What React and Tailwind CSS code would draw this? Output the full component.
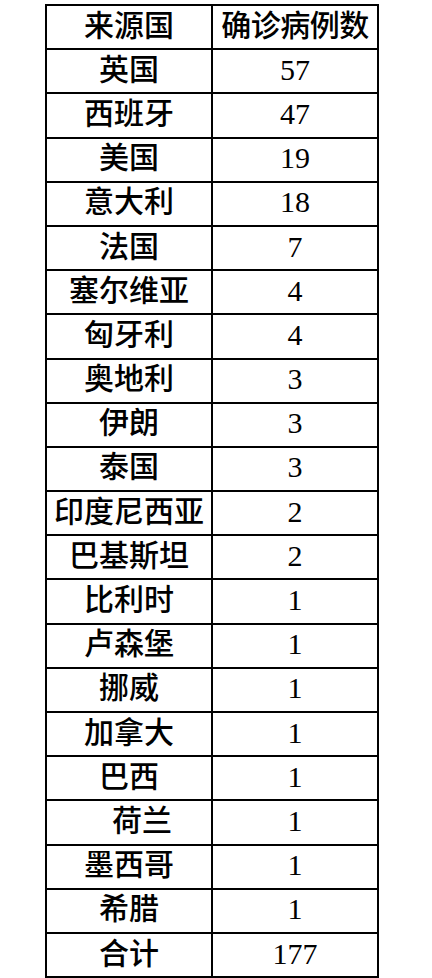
import React from "react";

const rows = [
    ["英国", "57"],
    ["西班牙", "47"],
    ["美国", "19"],
    ["意大利", "18"],
    ["法国", "7"],
    ["塞尔维亚", "4"],
    ["匈牙利", "4"],
    ["奥地利", "3"],
    ["伊朗", "3"],
    ["泰国", "3"],
    ["印度尼西亚", "2"],
    ["巴基斯坦", "2"],
    ["比利时", "1"],
    ["卢森堡", "1"],
    ["挪威", "1"],
    ["加拿大", "1"],
    ["巴西", "1"],
    ["荷兰", "1"],
    ["墨西哥", "1"],
    ["希腊", "1"],
];

const font = { fontFamily: '"Liberation Serif", "Noto Sans CJK SC", serif' };

const App = () => {
    return (
        <div className="w-[432px] h-[978px] overflow-hidden bg-white text-black font-medium" style={font}>
            <table className="ml-[45px] mt-[4px] border-collapse table-fixed w-[334px]">
                <tbody>
                    {/* header */}
                    <tr className="h-[44.2px]">
                        <td className="w-[166px] border-2 border-black text-center text-[30px] leading-none pb-[3px]">
                            来源国
                        </td>
                        <td className="w-[166px] border-2 border-black text-center text-[30px] leading-none pb-[3px] whitespace-nowrap tracking-[-0.5px]">
                            确诊病例数
                        </td>
                    </tr>

                    {rows.map(([country, count], i) => (
                        <tr key={i} className="h-[44.2px]">
                            <td
                                className={
                                    "border-2 border-black text-center text-[30px] leading-none pb-[3px] whitespace-nowrap " +
                                    (country === "荷兰" ? "pl-[26px]" : "")
                                }
                            >
                                {country}
                            </td>
                            <td className="border-2 border-black text-center text-[30px] leading-none pb-[3px]">
                                {count}
                            </td>
                        </tr>
                    ))}

                    {/* total */}
                    <tr className="h-[44.2px]">
                        <td className="border-2 border-black text-center text-[30px] leading-none pb-[3px]">合计</td>
                        <td className="border-2 border-black text-center text-[30px] leading-none pb-[3px]">177</td>
                    </tr>
                </tbody>
            </table>

            {/* caption line, cut off by the bottom edge as in the screenshot */}
            <p className="mt-[6px] pl-[70px] text-[30px] leading-none whitespace-nowrap">
                注：数据来源于各地卫生健康委员会
            </p>
        </div>
    );
};

export default App;
